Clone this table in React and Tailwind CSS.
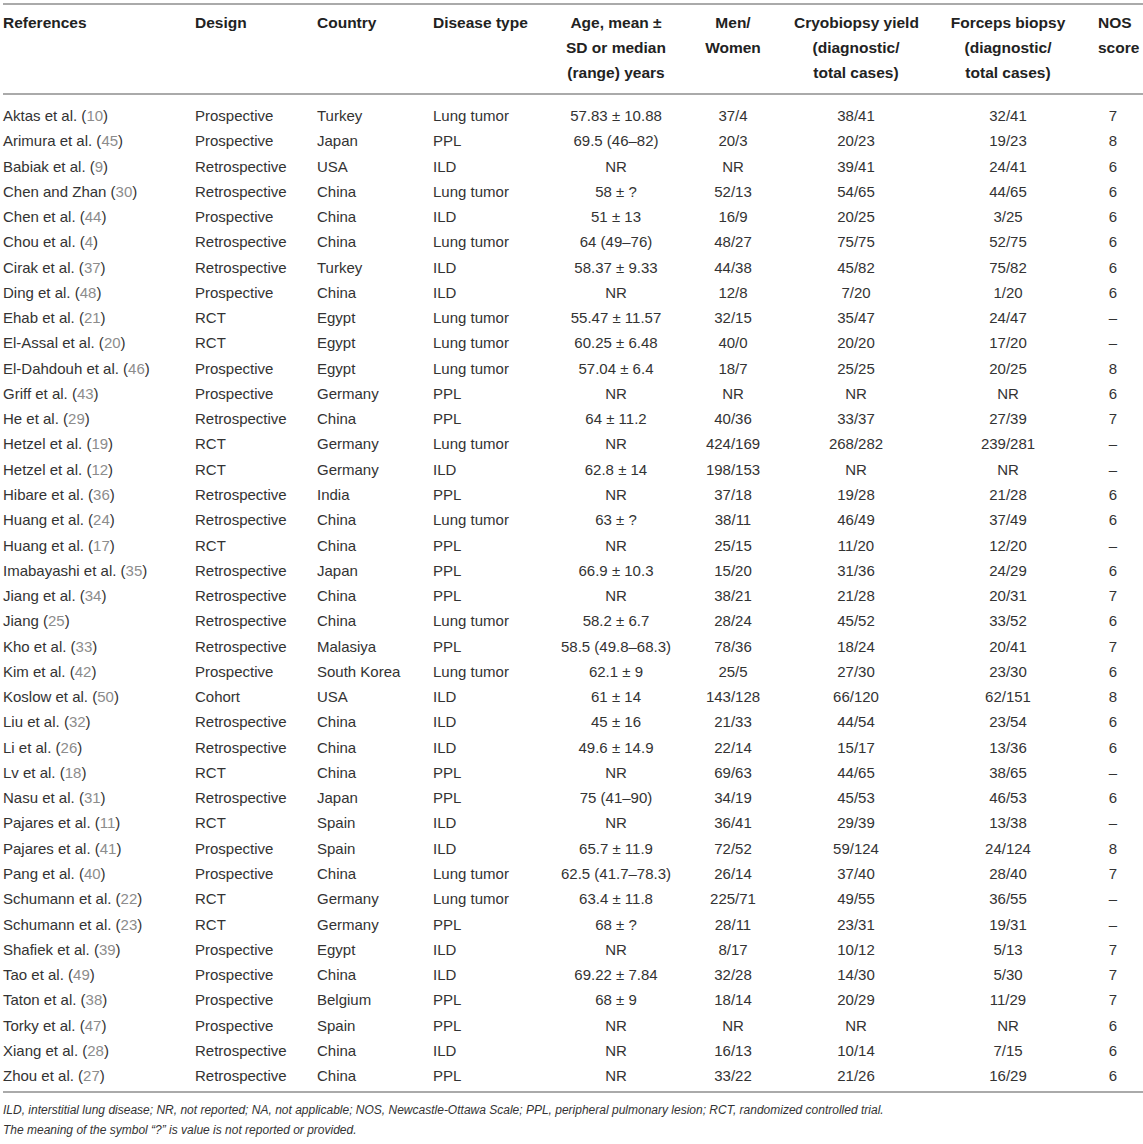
const rows = [
  ['Aktas et al.', '10', 'Prospective', 'Turkey', 'Lung tumor', '57.83 ± 10.88', '37/4', '38/41', '32/41', '7'],
  ['Arimura et al.', '45', 'Prospective', 'Japan', 'PPL', '69.5 (46–82)', '20/3', '20/23', '19/23', '8'],
  ['Babiak et al.', '9', 'Retrospective', 'USA', 'ILD', 'NR', 'NR', '39/41', '24/41', '6'],
  ['Chen and Zhan', '30', 'Retrospective', 'China', 'Lung tumor', '58 ± ?', '52/13', '54/65', '44/65', '6'],
  ['Chen et al.', '44', 'Prospective', 'China', 'ILD', '51 ± 13', '16/9', '20/25', '3/25', '6'],
  ['Chou et al.', '4', 'Retrospective', 'China', 'Lung tumor', '64 (49–76)', '48/27', '75/75', '52/75', '6'],
  ['Cirak et al.', '37', 'Retrospective', 'Turkey', 'ILD', '58.37 ± 9.33', '44/38', '45/82', '75/82', '6'],
  ['Ding et al.', '48', 'Prospective', 'China', 'ILD', 'NR', '12/8', '7/20', '1/20', '6'],
  ['Ehab et al.', '21', 'RCT', 'Egypt', 'Lung tumor', '55.47 ± 11.57', '32/15', '35/47', '24/47', '–'],
  ['El-Assal et al.', '20', 'RCT', 'Egypt', 'Lung tumor', '60.25 ± 6.48', '40/0', '20/20', '17/20', '–'],
  ['El-Dahdouh et al.', '46', 'Prospective', 'Egypt', 'Lung tumor', '57.04 ± 6.4', '18/7', '25/25', '20/25', '8'],
  ['Griff et al.', '43', 'Prospective', 'Germany', 'PPL', 'NR', 'NR', 'NR', 'NR', '6'],
  ['He et al.', '29', 'Retrospective', 'China', 'PPL', '64 ± 11.2', '40/36', '33/37', '27/39', '7'],
  ['Hetzel et al.', '19', 'RCT', 'Germany', 'Lung tumor', 'NR', '424/169', '268/282', '239/281', '–'],
  ['Hetzel et al.', '12', 'RCT', 'Germany', 'ILD', '62.8 ± 14', '198/153', 'NR', 'NR', '–'],
  ['Hibare et al.', '36', 'Retrospective', 'India', 'PPL', 'NR', '37/18', '19/28', '21/28', '6'],
  ['Huang et al.', '24', 'Retrospective', 'China', 'Lung tumor', '63 ± ?', '38/11', '46/49', '37/49', '6'],
  ['Huang et al.', '17', 'RCT', 'China', 'PPL', 'NR', '25/15', '11/20', '12/20', '–'],
  ['Imabayashi et al.', '35', 'Retrospective', 'Japan', 'PPL', '66.9 ± 10.3', '15/20', '31/36', '24/29', '6'],
  ['Jiang et al.', '34', 'Retrospective', 'China', 'PPL', 'NR', '38/21', '21/28', '20/31', '7'],
  ['Jiang', '25', 'Retrospective', 'China', 'Lung tumor', '58.2 ± 6.7', '28/24', '45/52', '33/52', '6'],
  ['Kho et al.', '33', 'Retrospective', 'Malasiya', 'PPL', '58.5 (49.8–68.3)', '78/36', '18/24', '20/41', '7'],
  ['Kim et al.', '42', 'Prospective', 'South Korea', 'Lung tumor', '62.1 ± 9', '25/5', '27/30', '23/30', '6'],
  ['Koslow et al.', '50', 'Cohort', 'USA', 'ILD', '61 ± 14', '143/128', '66/120', '62/151', '8'],
  ['Liu et al.', '32', 'Retrospective', 'China', 'ILD', '45 ± 16', '21/33', '44/54', '23/54', '6'],
  ['Li et al.', '26', 'Retrospective', 'China', 'ILD', '49.6 ± 14.9', '22/14', '15/17', '13/36', '6'],
  ['Lv et al.', '18', 'RCT', 'China', 'PPL', 'NR', '69/63', '44/65', '38/65', '–'],
  ['Nasu et al.', '31', 'Retrospective', 'Japan', 'PPL', '75 (41–90)', '34/19', '45/53', '46/53', '6'],
  ['Pajares et al.', '11', 'RCT', 'Spain', 'ILD', 'NR', '36/41', '29/39', '13/38', '–'],
  ['Pajares et al.', '41', 'Prospective', 'Spain', 'ILD', '65.7 ± 11.9', '72/52', '59/124', '24/124', '8'],
  ['Pang et al.', '40', 'Prospective', 'China', 'Lung tumor', '62.5 (41.7–78.3)', '26/14', '37/40', '28/40', '7'],
  ['Schumann et al.', '22', 'RCT', 'Germany', 'Lung tumor', '63.4 ± 11.8', '225/71', '49/55', '36/55', '–'],
  ['Schumann et al.', '23', 'RCT', 'Germany', 'PPL', '68 ± ?', '28/11', '23/31', '19/31', '–'],
  ['Shafiek et al.', '39', 'Prospective', 'Egypt', 'ILD', 'NR', '8/17', '10/12', '5/13', '7'],
  ['Tao et al.', '49', 'Prospective', 'China', 'ILD', '69.22 ± 7.84', '32/28', '14/30', '5/30', '7'],
  ['Taton et al.', '38', 'Prospective', 'Belgium', 'PPL', '68 ± 9', '18/14', '20/29', '11/29', '7'],
  ['Torky et al.', '47', 'Prospective', 'Spain', 'PPL', 'NR', 'NR', 'NR', 'NR', '6'],
  ['Xiang et al.', '28', 'Retrospective', 'China', 'ILD', 'NR', '16/13', '10/14', '7/15', '6'],
  ['Zhou et al.', '27', 'Retrospective', 'China', 'PPL', 'NR', '33/22', '21/26', '16/29', '6'],
]

export default function App() {
  return (
    <div className="w-[1143px] overflow-hidden bg-white pt-[3px] font-['Liberation_Sans',Arial,sans-serif] text-[15px] text-[#333]">
      <table className="ml-[3px] w-[1145px] table-fixed border-collapse">
        <colgroup>
          <col className="w-[192px]" />
          <col className="w-[122px]" />
          <col className="w-[116px]" />
          <col className="w-[127px]" />
          <col className="w-[112px]" />
          <col className="w-[122px]" />
          <col className="w-[124px]" />
          <col className="w-[180px]" />
          <col className="w-[30px]" />
          <col className="w-[20px]" />
        </colgroup>
        <thead>
          <tr className="border-y-2 border-[#aaa] align-top text-[15.5px] font-bold text-[#222] leading-[25px]">
            <th className="pt-[5px] pb-[8px] text-left font-bold">References</th>
            <th className="pt-[5px] pb-[8px] text-left font-bold">Design</th>
            <th className="pt-[5px] pb-[8px] text-left font-bold">Country</th>
            <th className="pt-[5px] pb-[8px] text-left font-bold whitespace-nowrap">Disease type</th>
            <th className="pt-[5px] pb-[8px] text-center font-bold whitespace-nowrap">
              Age, mean ±<br />SD or median<br />(range) years
            </th>
            <th className="pt-[5px] pb-[8px] text-center font-bold whitespace-nowrap">
              Men/<br />Women
            </th>
            <th className="pt-[5px] pb-[8px] text-center font-bold whitespace-nowrap">
              Cryobiopsy yield<br />(diagnostic/<br />total cases)
            </th>
            <th className="pt-[5px] pb-[8px] text-center font-bold whitespace-nowrap">
              Forceps biopsy<br />(diagnostic/<br />total cases)
            </th>
            <th className="pt-[5px] pb-[8px] text-left font-bold whitespace-nowrap">
              NOS<br />score
            </th>
            <th />
          </tr>
        </thead>
        <tbody className="border-b-2 border-[#aaa]">
          {rows.map((r, i) => {
            const pad = i === 0 ? 'pt-[8px]' : i === rows.length - 1 ? 'pb-[3px]' : ''
            return (
              <tr key={i} className="leading-[25.26px]">
                <td className={`${pad} whitespace-nowrap`}>
                  {r[0]} (<span className="text-[#8c8c8c]">{r[1]}</span>)
                </td>
                <td className={pad}>{r[2]}</td>
                <td className={`${pad} whitespace-nowrap`}>{r[3]}</td>
                <td className={pad}>{r[4]}</td>
                <td className={`${pad} text-center whitespace-nowrap`}>{r[5]}</td>
                <td className={`${pad} text-center`}>{r[6]}</td>
                <td className={`${pad} text-center`}>{r[7]}</td>
                <td className={`${pad} text-center`}>{r[8]}</td>
                <td className={`${pad} text-center`}>{r[9]}</td>
                <td className={pad} />
              </tr>
            )
          })}
        </tbody>
      </table>
      <div className="ml-[3px] pt-[7px] text-[12px] italic leading-[20px] text-[#333]">
        <p>
          ILD, interstitial lung disease; NR, not reported; NA, not applicable; NOS, Newcastle-Ottawa Scale; PPL, peripheral pulmonary lesion; RCT, randomized controlled trial.
        </p>
        <p>The meaning of the symbol “?” is value is not reported or provided.</p>
      </div>
    </div>
  )
}
